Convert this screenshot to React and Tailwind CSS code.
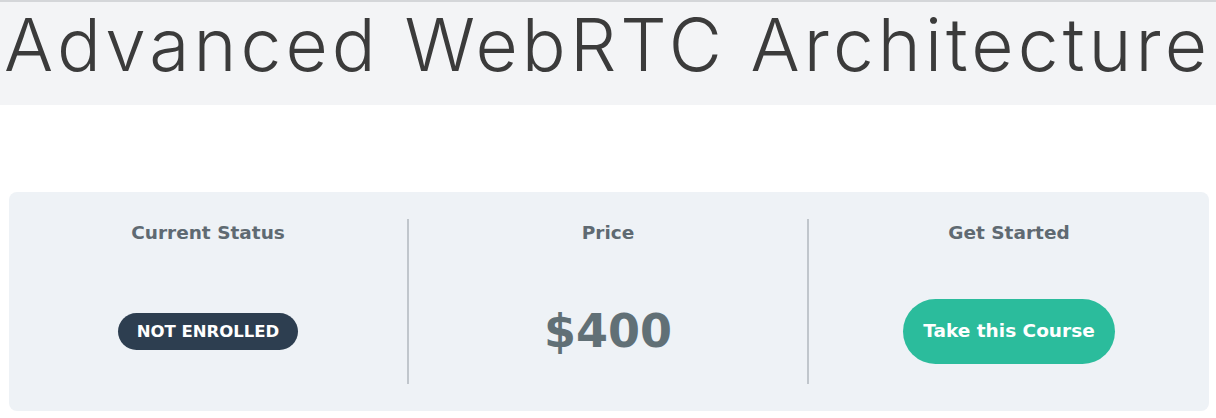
import React from 'react';

const bold = "font-['DejaVu_Sans',sans-serif] font-bold";

function Column({ title, children, divider }) {
  return (
    <div className={`flex h-[165px] flex-col items-center ${divider ? 'border-l-2 border-[#c0c6cc]' : ''}`}>
      <h3 className={`${bold} mt-[1px] text-[18.5px] leading-[26px] text-[#5f6a72]`}>{title}</h3>
      <div className="flex flex-1 items-center justify-center pt-[32px]">{children}</div>
    </div>
  );
}

export default function App() {
  return (
    <div className="min-h-[418px] bg-white">
      <header className="h-[105px] border-t-2 border-[#d4d6d9] bg-[#f3f4f6]">
        <h1 className="pl-[4px] pt-[1px] font-['Inter',sans-serif] text-[73px] font-light leading-[84px] tracking-[4.1px] text-[#3b3b3b]">
          Advanced WebRTC Architecture
        </h1>
      </header>

      <section className="mx-[9px] mt-[87px] w-[1200px] rounded-lg bg-[#eef2f6] py-[27px]">
        <div className="grid grid-cols-[398px_400px_1fr]">
          <Column title="Current Status">
            <span className={`${bold} rounded-full bg-[#2d3e50] px-[19px] py-[8px] text-[16.5px] leading-[21px] text-white`}>
              NOT ENROLLED
            </span>
          </Column>
          <Column title="Price" divider>
            <span className={`${bold} text-[46px] leading-[52px] text-[#617076]`}>$400</span>
          </Column>
          <Column title="Get Started" divider>
            <button
              type="button"
              className={`${bold} h-[65px] rounded-full bg-[#2bbc9c] px-[20px] text-[18.5px] text-white`}
            >
              Take this Course
            </button>
          </Column>
        </div>
      </section>
    </div>
  );
}
